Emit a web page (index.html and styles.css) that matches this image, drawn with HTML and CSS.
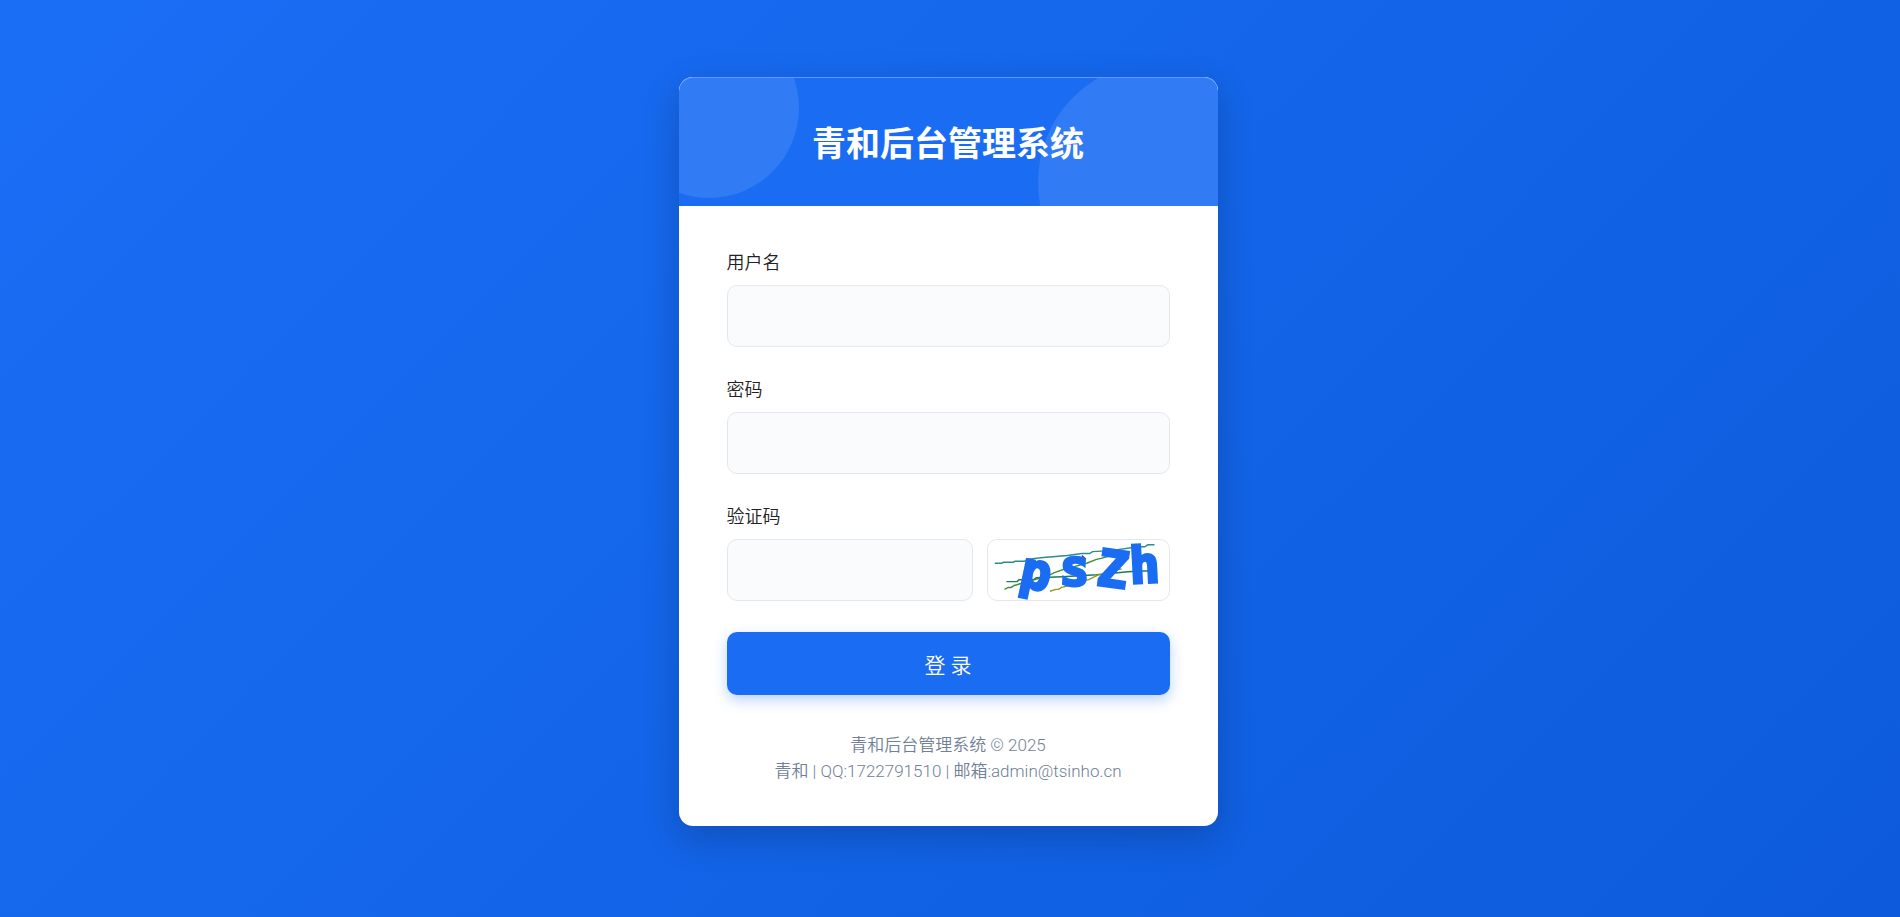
FILE: index.html
```html
<!DOCTYPE html>
<html lang="zh-CN">
<head>
<meta charset="utf-8">
<title>青和后台管理系统</title>
<link rel="stylesheet" href="styles.css">
</head>
<body>
<main class="card">
  <header class="card-header">
    <h1 class="title">青和后台管理系统</h1>
  </header>
  <div class="card-body">
    <form class="form">
      <div class="field">
        <label for="username">用户名</label>
        <input class="input" id="username" type="text">
      </div>
      <div class="field">
        <label for="password">密码</label>
        <input class="input" id="password" type="password">
      </div>
      <div class="field">
        <label for="captcha">验证码</label>
        <div class="captcha-row">
          <input class="input" id="captcha" type="text">
          <svg class="captcha" viewBox="0 0 183 62" role="img" aria-label="验证码图片">
            <g class="captcha-lines">
              <path stroke="#2a8c8c" d="M5 24H12L14 23H24L26 22H36L38 20L55 18L68 17L80 16L95 14H103L106 12L125 11L153 7H160L163 5H170"/>
              <path stroke="#1f7a5a" d="M17 43H28L30 41H45L48 39L75 38L110 36L140 33L153 32H165"/>
              <path stroke="#3f8f3a" d="M15 51L19 49H22L25 47L32 45L60 37L66 34L80 29L85 28L100 24L110 20L115 19L125 16"/>
              <path stroke="#8f9a2a" d="M62 53L68 51H71L74 49L82 47L102 41L112 36L120 35L126 31L136 30"/>
              <path stroke="#5a2a8c" d="M95 16L99 20"/>
            </g>
            <g class="captcha-text">
              <text transform="translate(29 47) rotate(12)">p</text>
              <text transform="translate(71 46) rotate(3)">s</text>
              <text transform="translate(109 46) rotate(8)">Z</text>
              <text transform="translate(145 45) rotate(-3)">h</text>
            </g>
          </svg>
        </div>
      </div>
      <button class="submit" type="submit">登 录</button>
    </form>
    <footer class="footer">
      <p>青和后台管理系统 © 2025</p>
      <p>青和 | QQ:1722791510 | 邮箱:admin@tsinho.cn</p>
    </footer>
  </div>
</main>
</body>
</html>
```

FILE: styles.css
```css
* {
  box-sizing: border-box;
}

body {
  margin: 0;
  min-height: 100vh;
  padding: 0 4px 14px 0;
  display: flex;
  align-items: center;
  justify-content: center;
  background: linear-gradient(135deg, #1a6ef5 0%, #0d5bdc 100%);
  font-family: Roboto, "Noto Sans CJK SC", sans-serif;
  font-weight: 350;
  color: #222;
}

.card {
  width: 100%;
  max-width: 539px;
  border-radius: 14px;
  overflow: hidden;
  background: #fff;
  box-shadow: 0 12px 36px rgba(0, 0, 0, 0.2);
}

.card-header {
  position: relative;
  overflow: hidden;
  padding: 44px 36px 40px;
  border-radius: 14px 14px 0 0;
  border-top: 1px solid #5f9af8;
  background: #1a6cf3;
  text-align: center;
}

.card-header::before,
.card-header::after {
  content: "";
  position: absolute;
  border-radius: 50%;
  background: rgba(255, 255, 255, 0.1);
}

.card-header::before {
  width: 180px;
  height: 180px;
  top: -60px;
  left: -60px;
}

.card-header::after {
  width: 240px;
  height: 240px;
  right: -60px;
  bottom: -96px;
}

.title {
  position: relative;
  margin: 0;
  color: #fff;
  font-size: 34px;
  line-height: 44px;
  font-weight: 700;
}

.card-body {
  padding: 45px 48px 42px;
}

.form {
  display: flex;
  flex-direction: column;
  gap: 31px;
}

.field {
  display: flex;
  flex-direction: column;
  gap: 10px;
}

.field label {
  font-size: 18px;
  line-height: 24px;
}

.input {
  width: 100%;
  min-width: 0;
  height: 62px;
  padding: 0 18px;
  border: 1px solid #e4e8ee;
  border-radius: 10px;
  background: #f9fbfd;
  font: inherit;
  font-size: 18px;
}

.captcha-row {
  display: flex;
  gap: 14px;
}

.captcha-row .input {
  flex: 1;
}

.captcha {
  flex: none;
  width: 183px;
  height: 62px;
  overflow: visible;
  border: 1px solid #e4e8ee;
  border-radius: 10px;
  background: #fff;
}

.captcha-text {
  fill: #1a6cf3;
  stroke: #1a6cf3;
  stroke-width: 3;
  font: 700 52px "DejaVu Sans Mono", monospace;
}

.captcha-lines {
  fill: none;
  stroke-width: 1.5;
}

.submit {
  height: 63px;
  border: 0;
  border-radius: 10px;
  background: #1a6cf3;
  box-shadow: 0 5px 14px rgba(26, 108, 243, 0.3);
  color: #fff;
  font: inherit;
  font-size: 21px;
}

.footer {
  margin-top: 37px;
  color: #718096;
  font-size: 17px;
  line-height: 26px;
  text-align: center;
}

.footer p {
  margin: 0;
}
```
